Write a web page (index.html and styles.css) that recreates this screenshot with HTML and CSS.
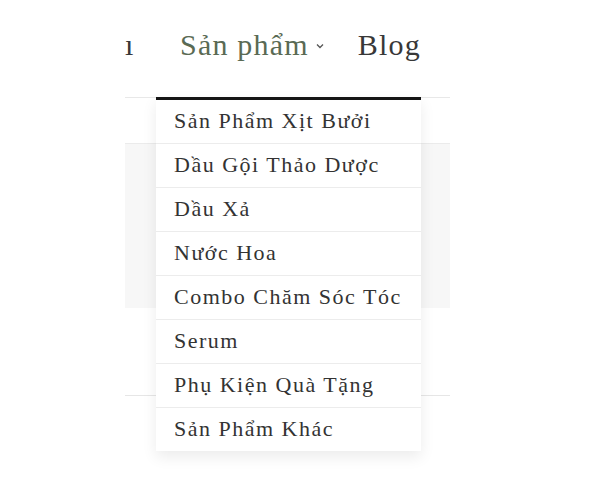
FILE: index.html
```html
<!DOCTYPE html>
<html lang="vi">
<head>
    <meta charset="UTF-8">
    <meta name="viewport" content="width=device-width, initial-scale=1.0">
    <title>Sản phẩm</title>
    <link rel="stylesheet" href="styles.css">
</head>
<body>

    <!-- Thanh menu -->
    <header class="header">
        <nav class="nav">
            <a class="nav-item nav-cut">ı</a>
            <div class="nav-drop">
                <a class="nav-item nav-active">Sản phẩm
                    <svg class="chevron" width="10" height="8" viewBox="0 0 10 8"><path d="M2 2.5 L5 5.5 L8 2.5" fill="none" stroke="#555" stroke-width="1.3"/></svg>
                </a>
                <ul class="dropdown">
                    <li>Sản Phẩm Xịt Bưởi</li>
                    <li>Dầu Gội Thảo Dược</li>
                    <li>Dầu Xả</li>
                    <li>Nước Hoa</li>
                    <li>Combo Chăm Sóc Tóc</li>
                    <li>Serum</li>
                    <li>Phụ Kiện Quà Tặng</li>
                    <li>Sản Phẩm Khác</li>
                </ul>
            </div>
            <a class="nav-item">Blog</a>
        </nav>
    </header>

    <!-- Nội dung phía sau -->
    <main class="page">
        <div class="row-top"></div>
        <div class="block-gray"></div>
        <div class="row-bottom"></div>
    </main>

</body>
</html>
```

FILE: styles.css
```css
body {
    font-family: "Liberation Serif", "DejaVu Serif", serif;
    background-color: #fff;
    margin: 0;
    min-height: 482px;
    color: #333;
}
.header {
    height: 97px;
}
.nav {
    display: flex;
    align-items: flex-start;
    padding-left: 125px;
    padding-top: 27px;
}
.nav-item {
    font-size: 30px;
    letter-spacing: 1.2px;
    color: #383838;
    text-decoration: none;
    line-height: 36px;
    display: flex;
    align-items: center;
}
.nav-cut {
    width: 55px;
}
.nav-drop {
    position: relative;
    margin-right: 33px;
}
.nav-active {
    color: #5a6a54;
}
.chevron {
    margin-left: 6px;
    margin-top: 2px;
}
.dropdown {
    position: absolute;
    top: 70px;
    left: -24px;
    width: 265px;
    margin: 0;
    padding: 0;
    list-style: none;
    background-color: #fff;
    border-top: 3px solid #151515;
    box-shadow: 0px 6px 14px rgba(0, 0, 0, 0.08);
    z-index: 2;
}
.dropdown li {
    font-size: 22px;
    letter-spacing: 1.5px;
    color: #333;
    padding: 0 18px;
    height: 43px;
    line-height: 42px;
    border-bottom: 1px solid #ececec;
}
.dropdown li:last-child {
    border-bottom: none;
}
.page {
    margin-left: 125px;
    width: 325px;
}
.row-top {
    height: 45px;
    border-top: 1px solid #e8e8e8;
}
.block-gray {
    height: 164px;
    background-color: #f7f7f7;
    border-top: 1px solid #ebebeb;
}
.row-bottom {
    height: 87px;
    border-bottom: 1px solid #e6e6e6;
}
```
